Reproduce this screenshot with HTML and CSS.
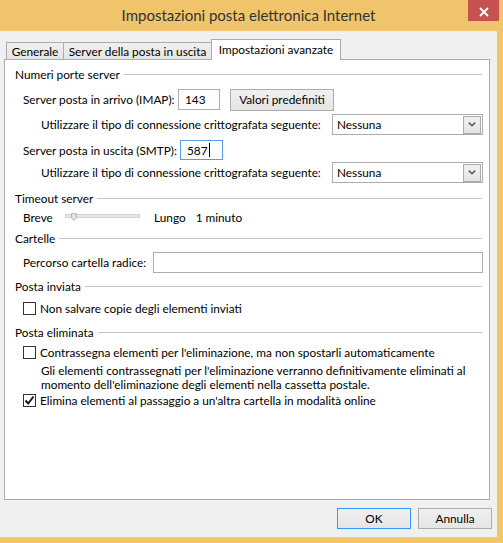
FILE: index.html
```html
<!DOCTYPE html>
<html lang="it">
<head>
<meta charset="utf-8">
<title>Impostazioni posta elettronica Internet</title>
<link rel="stylesheet" href="styles.css">
</head>
<body>
<div class="window">
  <div class="titlebar">
    <div class="title">Impostazioni posta elettronica Internet</div>
    <div class="close">
      <svg width="10" height="10" viewBox="0 0 10 10"><path d="M1 1 L9 9 M9 1 L1 9" stroke="#fff" stroke-width="1.8" fill="none"/></svg>
    </div>
  </div>
  <div class="client">
    <div class="tabs">
      <div class="tab tab-gen">Generale</div>
      <div class="tab tab-srv">Server della posta in uscita</div>
      <div class="tab tab-adv active">Impostazioni avanzate</div>
    </div>
    <div class="panel">
      <div class="group-head gh-ports"><span>Numeri porte server</span></div>
      <div class="row row-imap">
        <span class="lbl lbl-imap">Server posta in arrivo (IMAP):</span>
        <div class="input port">143</div>
        <div class="button btn-def">Valori predefiniti</div>
      </div>
      <div class="row sub row-enc1">
        <span class="lbl">Utilizzare il tipo di connessione crittografata seguente:</span>
        <div class="select">
          <span class="sel-text">Nessuna</span>
          <span class="sel-arrow"><svg width="8" height="5" viewBox="0 0 8 5"><path d="M0.8 0.6 L4 3.8 L7.2 0.6" stroke="#5a5a5a" stroke-width="1.5" fill="none"/></svg></span>
        </div>
      </div>
      <div class="row row-smtp">
        <span class="lbl lbl-smtp">Server posta in uscita (SMTP):</span>
        <div class="input port focus">587<span class="caret"></span></div>
      </div>
      <div class="row sub row-enc2">
        <span class="lbl">Utilizzare il tipo di connessione crittografata seguente:</span>
        <div class="select">
          <span class="sel-text">Nessuna</span>
          <span class="sel-arrow"><svg width="8" height="5" viewBox="0 0 8 5"><path d="M0.8 0.6 L4 3.8 L7.2 0.6" stroke="#5a5a5a" stroke-width="1.5" fill="none"/></svg></span>
        </div>
      </div>

      <div class="group-head gh-timeout"><span>Timeout server</span></div>
      <div class="row row-slider">
        <span class="lbl lbl-breve">Breve</span>
        <svg class="slider" width="76" height="10" viewBox="0 0 76 10">
          <rect x="0.5" y="1.5" width="74" height="3" fill="#e7e7e7" stroke="#d4d4d4"/>
          <path d="M6.5 0.5 H11.5 V5 L9 7.5 L6.5 5 Z" fill="#e3e3e3" stroke="#b8b8b8"/>
        </svg>
        <span class="lbl lbl-lungo">Lungo</span>
        <span class="lbl">1 minuto</span>
      </div>

      <div class="group-head gh-folders"><span>Cartelle</span></div>
      <div class="row row-root">
        <span class="lbl lbl-root">Percorso cartella radice:</span>
        <div class="input root"></div>
      </div>

      <div class="group-head gh-sent"><span>Posta inviata</span></div>
      <div class="row row-cb-sent">
        <span class="cb"></span>
        <span class="lbl">Non salvare copie degli elementi inviati</span>
      </div>

      <div class="group-head gh-deleted"><span>Posta eliminata</span></div>
      <div class="row row-cb1">
        <span class="cb"></span>
        <span class="lbl">Contrassegna elementi per l'eliminazione, ma non spostarli automaticamente</span>
      </div>
      <div class="desc">Gli elementi contrassegnati per l'eliminazione verranno definitivamente eliminati al<br>momento dell'eliminazione degli elementi nella cassetta postale.</div>
      <div class="row row-cb2">
        <span class="cb checked"><svg width="11" height="11" viewBox="0 0 11 11"><path d="M1.5 5.5 L4.2 8.5 L9.5 1.5" stroke="#111" stroke-width="1.9" fill="none"/></svg></span>
        <span class="lbl">Elimina elementi al passaggio a un'altra cartella in modalità online</span>
      </div>
    </div>
    <div class="footer">
      <div class="button dlg default">OK</div>
      <div class="button dlg">Annulla</div>
    </div>
  </div>
</div>
</body>
</html>
```

FILE: styles.css
```css
* { box-sizing: border-box; }
html, body { margin: 0; padding: 0; }
body {
  width: 503px;
  height: 543px;
  overflow: hidden;
  font-family: Lato, "Liberation Sans", sans-serif;
  font-size: 11.8px;
  color: #000;
  background: #f0c46a;
}
.window {
  width: 503px;
  height: 543px;
  background: #f2c76b;
}
.titlebar {
  position: relative;
  height: 31px;
  background: #f0c46a;
}
.title {
  padding-right: 6px;
  text-align: center;
  line-height: 31px;
  font-size: 15px;
  color: #333;
}
.close {
  position: absolute;
  top: 0;
  right: 4px;
  width: 31px;
  height: 21px;
  background: #c75050;
  display: flex;
  align-items: center;
  justify-content: center;
}
.close svg { margin-top: 2px; }
.client {
  width: 497px;
  height: 506px;
  background: #f0f0f0;
  padding: 8px 0 0 4px;
}
.tabs {
  display: flex;
  align-items: flex-end;
  height: 20px;
  padding-left: 2px;
}
.tab {
  height: 17px;
  border: 1px solid #acacac;
  border-bottom: none;
  background: linear-gradient(#f0f0f0, #e5e5e5);
  display: flex;
  align-items: center;
  justify-content: center;
  white-space: nowrap;
}
.tab-gen { width: 58px; }
.tab-srv { width: 149px; margin-left: -1px; }
.tab-adv { width: 130px; margin-left: -1px; }
.tab.active {
  position: relative;
  z-index: 1;
  height: 21px;
  margin-bottom: -1px;
  background: #fff;
  padding-bottom: 1px;
}
.panel {
  width: 486px;
  height: 441px;
  border: 1px solid #acacac;
  background: #fff;
  padding: 6px 6px 0 10px;
}
.group-head {
  display: flex;
  align-items: center;
  height: 16px;
  white-space: nowrap;
}
.group-head::after {
  content: "";
  flex: 1;
  height: 1px;
  background: #c4c4c4;
  margin: 1px 1px 0 4px;
}
.gh-timeout { margin-top: 7px; }
.gh-folders { margin-top: 5px; }
.gh-sent { margin-top: 5px; }
.gh-deleted { margin-top: 8px; }

.row {
  display: flex;
  align-items: center;
  padding-left: 8px;
  white-space: nowrap;
}
.row.sub { padding-left: 26px; }
.row-imap { height: 21px; margin-top: 7px; }
.row-enc1 { height: 21px; margin-top: 4px; }
.row-smtp { height: 20px; margin-top: 5px; }
.row-enc2 { height: 21px; margin-top: 2px; }
.row-slider { height: 16px; margin-top: 3px; }
.row-root { height: 21px; margin-top: 6px; }
.row-cb-sent { height: 16px; margin-top: 6px; }
.row-cb1 { height: 16px; margin-top: 4px; }
.row-cb2 { height: 16px; margin-top: 0; }

.lbl-imap { width: 155px; }
.lbl-smtp { width: 157px; }
.lbl-breve { width: 42px; }
.lbl-lungo { margin-left: 13px; margin-right: 10px; }
.lbl-root { width: 130px; }

.input {
  border: 1px solid #abadb3;
  background: #fff;
  display: flex;
  align-items: center;
}
.input.port {
  width: 42px;
  height: 21px;
  padding-left: 6px;
}
.row-smtp .input.port { width: 43px; height: 20px; }
.input.focus { border-color: #569de5; }
.caret {
  display: inline-block;
  width: 1px;
  height: 14px;
  background: #000;
  margin-left: 1px;
}
.input.root {
  width: 330px;
  height: 21px;
}
.button {
  border: 1px solid #acacac;
  background: linear-gradient(#f0f0f0, #e5e5e5);
  display: flex;
  align-items: center;
  justify-content: center;
  white-space: nowrap;
}
.btn-def {
  width: 104px;
  height: 22px;
  margin-left: 10px;
}
.select {
  margin-left: auto;
  width: 151px;
  height: 21px;
  border: 1px solid #acacac;
  background: #fff;
  display: flex;
  align-items: center;
  padding: 0 1px 0 4px;
}
.sel-text { flex: 1; }
.sel-arrow {
  width: 18px;
  height: 18px;
  border: 1px solid #acacac;
  background: linear-gradient(#f2f2f2, #e3e3e3);
  display: flex;
  align-items: center;
  justify-content: center;
}
.slider { display: block; margin-top: 1px; }
.cb {
  width: 13px;
  height: 13px;
  border: 1px solid #333;
  background: #fff;
  margin-right: 4px;
  display: flex;
  align-items: center;
  justify-content: center;
}
.desc {
  margin-top: 4px;
  padding-left: 26px;
  line-height: 14.2px;
  white-space: nowrap;
}
.footer {
  display: flex;
  justify-content: flex-end;
  gap: 7px;
  margin-top: 8px;
  padding-right: 5px;
}
.button.dlg {
  width: 74px;
  height: 21px;
}
.button.default { border-color: #3399ff; }
```
